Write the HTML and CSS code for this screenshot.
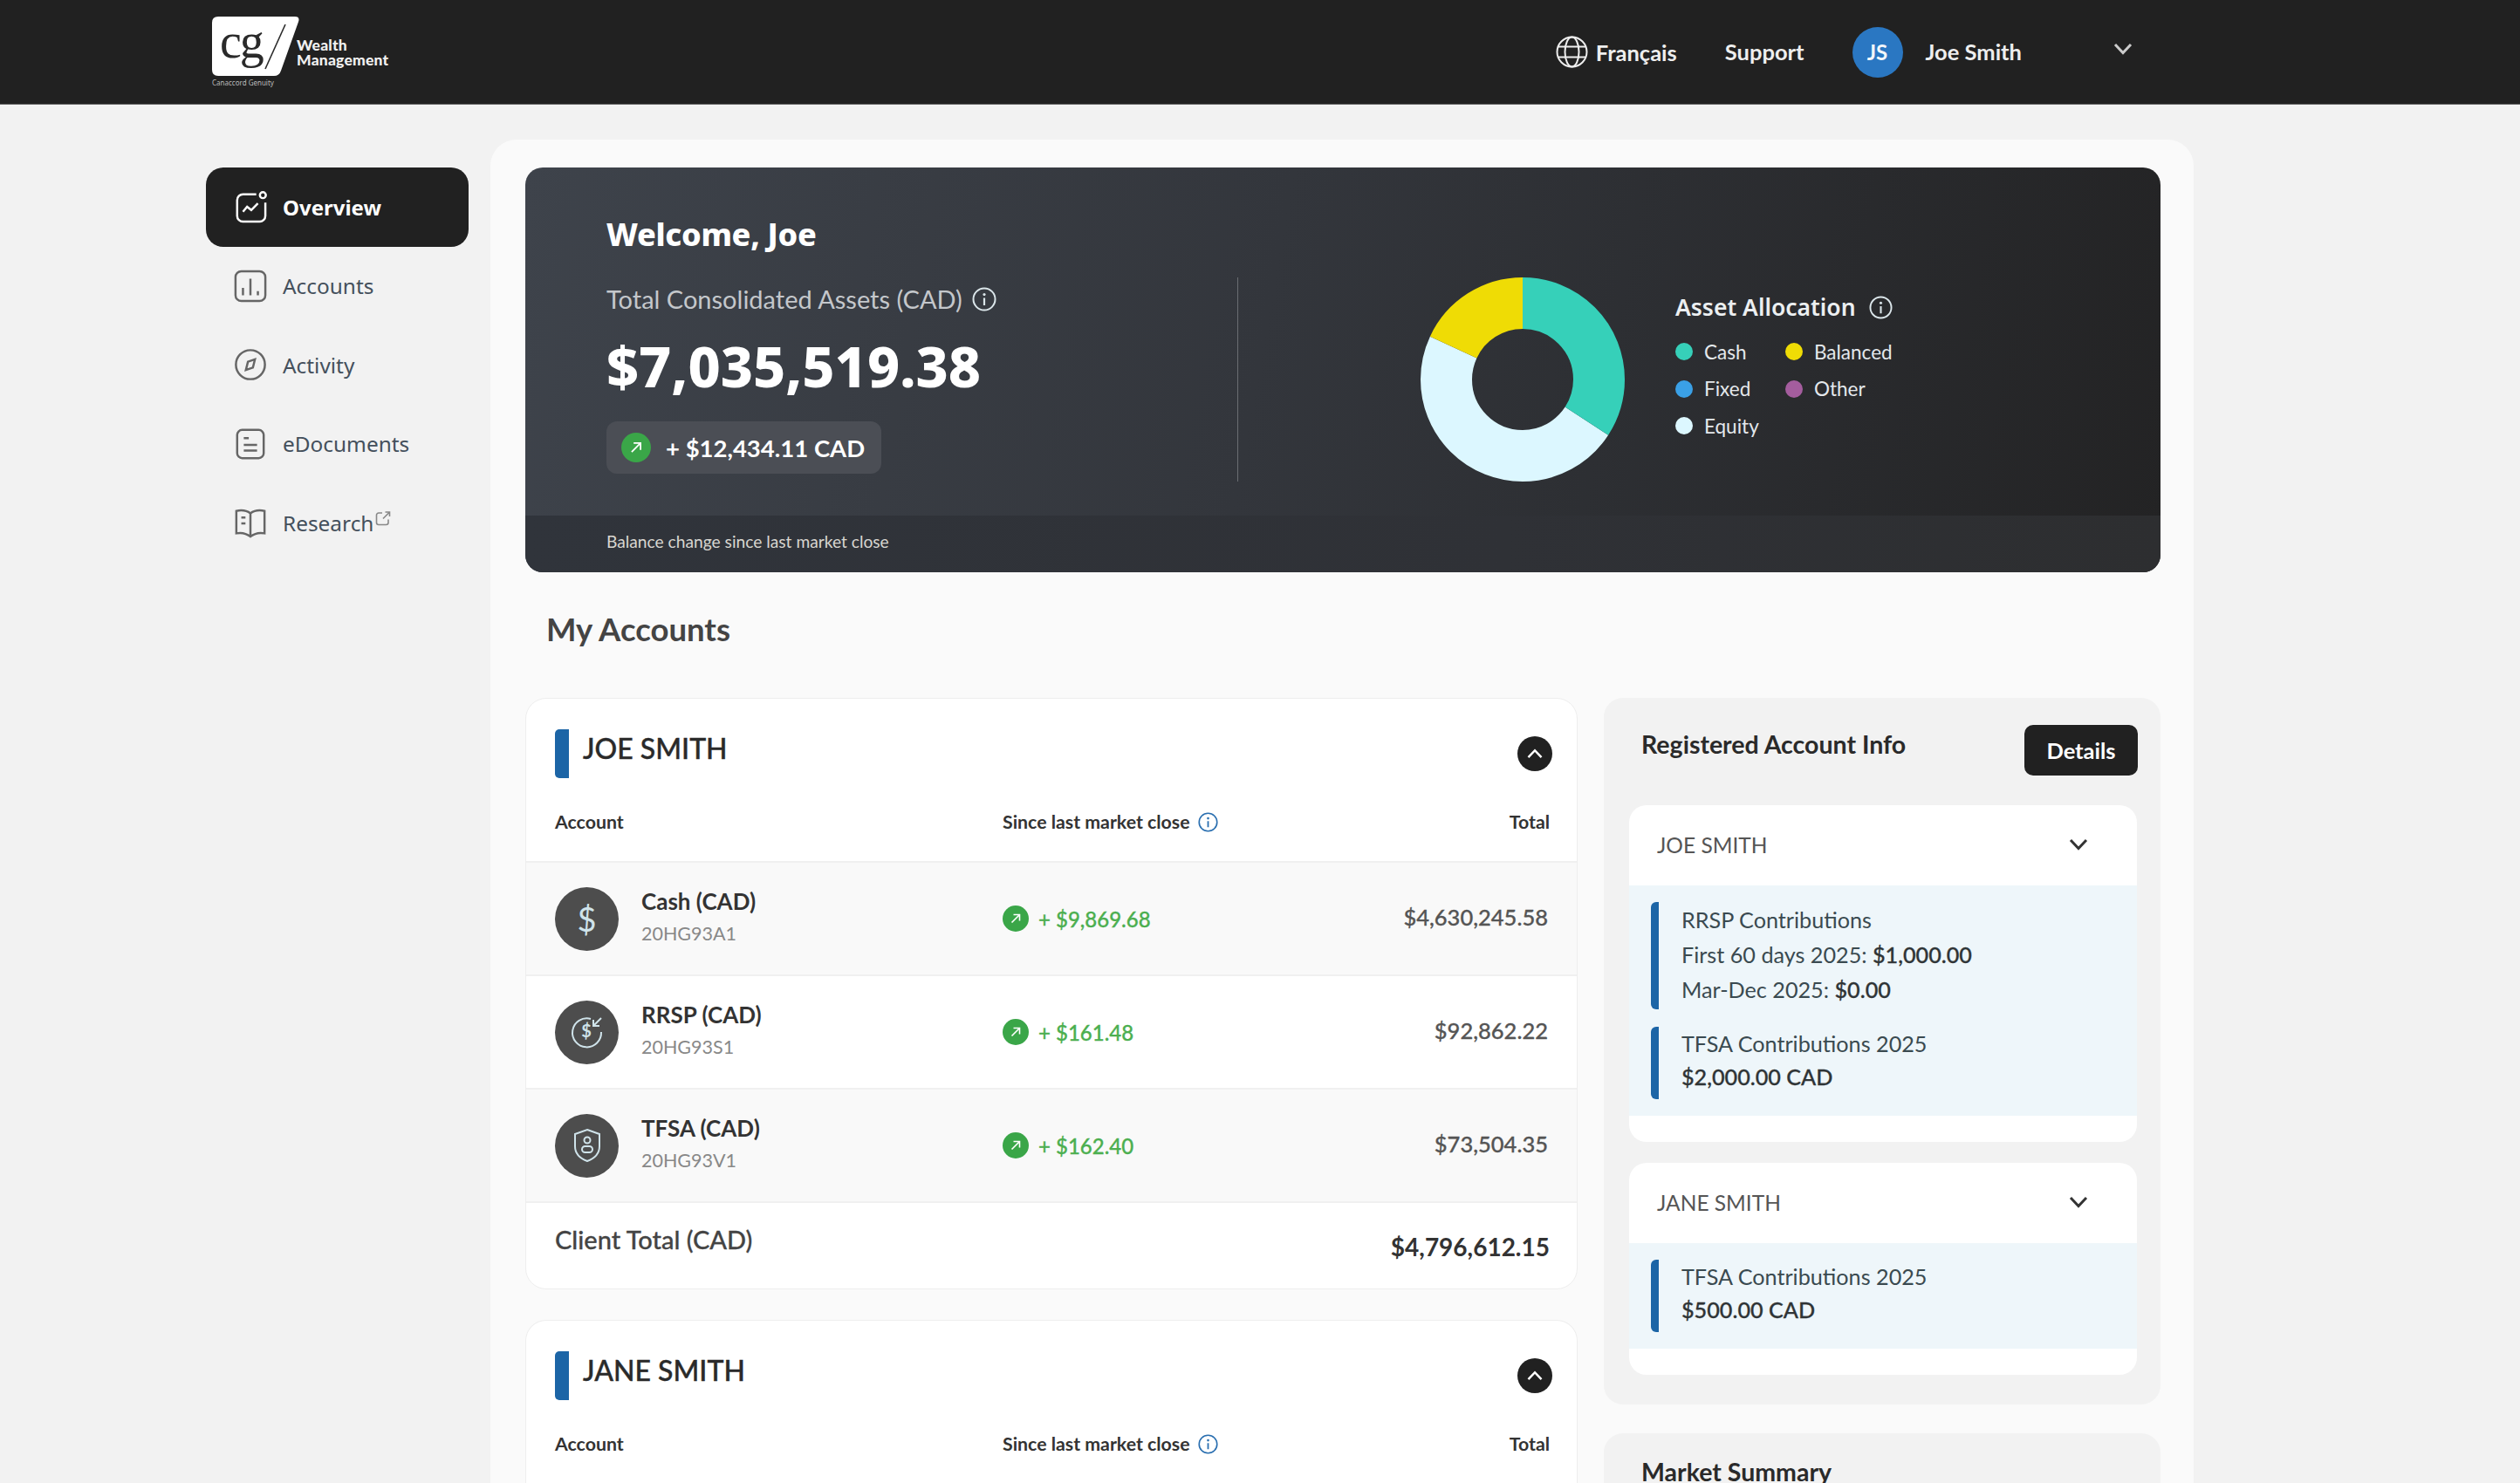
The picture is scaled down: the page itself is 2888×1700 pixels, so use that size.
FILE: index.html
```html
<!DOCTYPE html>
<html lang="en">
<head>
    <meta charset="UTF-8">
    <meta name="viewport" content="width=device-width, initial-scale=1.0">
    <title>CG Wealth Management - Overview</title>
    <link rel="stylesheet" href="styles.css">
</head>
<body>

    <svg class="icon-defs" width="0" height="0">
        <symbol id="arrow-up-right" viewBox="0 0 30 30">
            <circle cx="15" cy="15" r="15" fill="#3aa648"/>
            <path d="M10.5 19.5 19 11M12.5 10.5H19.5V17.5" fill="none" stroke="#fff" stroke-width="1.6"/>
        </symbol>
        <symbol id="info" viewBox="0 0 28 28">
            <circle cx="14" cy="14" r="12.5" fill="none" stroke="currentColor" stroke-width="2"/>
            <path d="M14 12.5V21" stroke="currentColor" stroke-width="2.2" fill="none"/>
            <circle cx="14" cy="8.6" r="1.6" fill="currentColor"/>
        </symbol>
        <symbol id="chevron" viewBox="0 0 24 16">
            <path d="M3 3 12 12.5 21 3" fill="none" stroke="currentColor" stroke-width="3"/>
        </symbol>
    </svg>

    <!-- Top bar -->
    <header class="topbar">
        <div class="logo">
            <div class="logo-mark">
                <svg class="logo-shape" viewBox="0 0 100 68">
                    <path d="M7 0H95Q101 0 99 6L79 62Q77 68 71 68H7Q0 68 0 61V7Q0 0 7 0Z" fill="#fff"/>
                    <path d="M84 9 61 60" stroke="#2a2a2a" stroke-width="1.6"/>
                </svg>
                <span class="logo-cg">cg</span>
                <div class="logo-sub">Canaccord Genuity</div>
            </div>
            <div class="logo-name">Wealth<br>Management</div>
        </div>
        <nav class="top-menu">
            <a class="lang" href="#">
                <svg width="37" height="37" viewBox="0 0 37 37" fill="none" stroke="#eee" stroke-width="2">
                    <circle cx="18.5" cy="18.5" r="17"/>
                    <ellipse cx="18.5" cy="18.5" rx="8" ry="17"/>
                    <path d="M3 12.5H34M3 24.5H34"/>
                </svg>
                Français
            </a>
            <a class="support" href="#">Support</a>
            <div class="avatar">JS</div>
            <a class="user-name" href="#">Joe Smith</a>
            <svg class="user-chevron" width="24" height="16"><use href="#chevron"/></svg>
        </nav>
    </header>

    <div class="page">
        <!-- Side menu -->
        <aside class="sidebar">
            <a class="side-item active" href="#">
                <svg class="side-icon" viewBox="0 0 40 40" fill="none" stroke="currentColor" stroke-width="2.6">
                    <path d="M27 5H11a7 7 0 0 0-7 7V31a7 7 0 0 0 7 7H31a7 7 0 0 0 7-7V15"/>
                    <circle cx="35" cy="6" r="3.6"/>
                    <path d="M11 26 16 20 21 24 29 16"/>
                </svg>
                Overview
            </a>
            <a class="side-item" href="#">
                <svg class="side-icon" viewBox="0 0 40 40" fill="none" stroke="#666" stroke-width="2.6">
                    <rect x="2" y="2" width="36" height="36" rx="7"/>
                    <path d="M11 22V31M20 11V31M29 26V31"/>
                </svg>
                Accounts
            </a>
            <a class="side-item" href="#">
                <svg class="side-icon" viewBox="0 0 40 40" fill="none" stroke="#666" stroke-width="2.6">
                    <circle cx="20" cy="20" r="17.5"/>
                    <path d="M25.5 13.5 23 23.5 14.5 26.5 17 16.5Z"/>
                </svg>
                Activity
            </a>
            <a class="side-item" href="#">
                <svg class="side-icon" viewBox="0 0 40 40" fill="none" stroke="#666" stroke-width="2.6">
                    <rect x="4" y="3" width="32" height="34" rx="6"/>
                    <path d="M12 13H18M12 21H28M12 28H28"/>
                </svg>
                eDocuments
            </a>
            <a class="side-item" href="#">
                <svg class="side-icon" viewBox="0 0 40 40" fill="none" stroke="#666" stroke-width="2.6">
                    <path d="M20 9C15 5 8 5 3 6V33C8 32 15 33 20 37C25 33 32 32 37 33V6C32 5 25 5 20 9ZM20 9V37"/>
                    <path d="M9 14H14M9 21H14"/>
                </svg>
                Research
                <svg class="ext-icon" viewBox="0 0 18 18" fill="none" stroke="#888" stroke-width="1.6">
                    <path d="M8 3H4a2.5 2.5 0 0 0-2.500 2.500V14A2.500 2.500 0 0 0 4 16.500h8.500A2.500 2.500 0 0 0 15 14V10.500M9 9.500 16 2.500M11.500 2H16.500V7"/>
                </svg>
            </a>
        </aside>

        <main class="main-panel">
            <!-- Welcome banner -->
            <section class="hero">
                <div class="hero-top">
                    <div class="hero-left">
                        <h1 class="welcome">Welcome, Joe</h1>
                        <div class="assets-label">Total Consolidated Assets (CAD)
                            <svg class="info-light" width="28" height="28"><use href="#info"/></svg>
                        </div>
                        <div class="assets-value">$7,035,519.38</div>
                        <div class="change-chip">
                            <svg width="34" height="34"><use href="#arrow-up-right"/></svg>
                            + $12,434.11 CAD
                        </div>
                    </div>
                    <div class="hero-divider"></div>
                    <svg class="donut" width="234" height="234" viewBox="0 0 234 234" fill="none" stroke-width="59">
                        <g transform="rotate(-90 117 117)">
                            <circle cx="117" cy="117" r="87.500" stroke="#dcf7ff" pathLength="360" stroke-dasharray="172 360" stroke-dashoffset="-123"/>
                            <circle cx="117" cy="117" r="87.500" stroke="#36d0b9" pathLength="360" stroke-dasharray="123 360"/>
                            <circle cx="117" cy="117" r="87.500" stroke="#efdc05" pathLength="360" stroke-dasharray="65 360" stroke-dashoffset="-295"/>
                        </g>
                    </svg>
                    <div class="legend">
                        <div class="legend-title">Asset Allocation
                            <svg class="info-light" width="27" height="27"><use href="#info"/></svg>
                        </div>
                        <div class="legend-grid">
                            <div class="legend-item"><span class="dot dot-cash"></span>Cash</div>
                            <div class="legend-item"><span class="dot dot-balanced"></span>Balanced</div>
                            <div class="legend-item"><span class="dot dot-fixed"></span>Fixed</div>
                            <div class="legend-item"><span class="dot dot-other"></span>Other</div>
                            <div class="legend-item"><span class="dot dot-equity"></span>Equity</div>
                        </div>
                    </div>
                </div>
                <div class="hero-foot">Balance change since last market close</div>
            </section>

            <h2 class="section-title">My Accounts</h2>

            <div class="columns">
                <div class="accounts-col">
                    <section class="card">
                        <div class="card-head">
                            <span class="name-bar"></span>
                            <h3 class="client-name">JOE SMITH</h3>
                            <button class="toggle">
                                <svg width="20" height="14"><use href="#chevron"/></svg>
                            </button>
                        </div>
                        <div class="table-head">
                            <div>Account</div>
                            <div class="since">Since last market close
                                <svg class="info-blue" width="23" height="23"><use href="#info"/></svg>
                            </div>
                            <div class="right">Total</div>
                        </div>
                        <div class="row shaded">
                            <div class="acct">
                                <div class="acct-icon"><span class="dollar">$</span></div>
                                <div>
                                    <div class="acct-name">Cash (CAD)</div>
                                    <div class="acct-no">20HG93A1</div>
                                </div>
                            </div>
                            <div class="change"><svg width="30" height="30"><use href="#arrow-up-right"/></svg>+ $9,869.68</div>
                            <div class="amount">$4,630,245.58</div>
                        </div>
                        <div class="row">
                            <div class="acct">
                                <div class="acct-icon">
                                    <svg width="40" height="40" viewBox="0 0 40 40" fill="none" stroke="#cfe3ea" stroke-width="2">
                                        <path d="M24 5A16.500 16.500 0 1 0 36 20"/>
                                        <path d="M36 4 27 13M27 6V13H34"/>
                                        <text class="rrsp-dollar" x="19" y="26" text-anchor="middle">$</text>
                                    </svg>
                                </div>
                                <div>
                                    <div class="acct-name">RRSP (CAD)</div>
                                    <div class="acct-no">20HG93S1</div>
                                </div>
                            </div>
                            <div class="change"><svg width="30" height="30"><use href="#arrow-up-right"/></svg>+ $161.48</div>
                            <div class="amount">$92,862.22</div>
                        </div>
                        <div class="row shaded">
                            <div class="acct">
                                <div class="acct-icon">
                                    <svg width="34" height="40" viewBox="0 0 34 40" fill="none" stroke="#cfe3ea" stroke-width="2">
                                        <path d="M17 2 31 7V21C31 29 25 35 17 38 9 35 3 29 3 21V7Z"/>
                                        <circle cx="17" cy="14" r="3.500"/>
                                        <rect x="11" y="21" width="12" height="7" rx="3.500"/>
                                    </svg>
                                </div>
                                <div>
                                    <div class="acct-name">TFSA (CAD)</div>
                                    <div class="acct-no">20HG93V1</div>
                                </div>
                            </div>
                            <div class="change"><svg width="30" height="30"><use href="#arrow-up-right"/></svg>+ $162.40</div>
                            <div class="amount">$73,504.35</div>
                        </div>
                        <div class="card-foot">
                            <div class="client-total">Client Total (CAD)</div>
                            <div class="client-sum">$4,796,612.15</div>
                        </div>
                    </section>

                    <section class="card card-open">
                        <div class="card-head">
                            <span class="name-bar"></span>
                            <h3 class="client-name">JANE SMITH</h3>
                            <button class="toggle">
                                <svg width="20" height="14"><use href="#chevron"/></svg>
                            </button>
                        </div>
                        <div class="table-head">
                            <div>Account</div>
                            <div class="since">Since last market close
                                <svg class="info-blue" width="23" height="23"><use href="#info"/></svg>
                            </div>
                            <div class="right">Total</div>
                        </div>
                    </section>
                </div>

                <div class="side-col">
                    <section class="info-panel">
                        <div class="info-head">
                            <h3 class="panel-title">Registered Account Info</h3>
                            <button class="details-btn">Details</button>
                        </div>

                        <div class="reg-card">
                            <div class="reg-head">JOE SMITH
                                <svg width="24" height="16"><use href="#chevron"/></svg>
                            </div>
                            <div class="reg-body">
                                <div class="contrib">
                                    <div>RRSP Contributions</div>
                                    <div>First 60 days 2025: <span class="val">$1,000.00</span></div>
                                    <div>Mar-Dec 2025: <span class="val">$0.00</span></div>
                                </div>
                                <div class="contrib contrib-short">
                                    <div>TFSA Contributions 2025</div>
                                    <div class="val">$2,000.00 CAD</div>
                                </div>
                            </div>
                        </div>

                        <div class="reg-card">
                            <div class="reg-head">JANE SMITH
                                <svg width="24" height="16"><use href="#chevron"/></svg>
                            </div>
                            <div class="reg-body">
                                <div class="contrib contrib-short">
                                    <div>TFSA Contributions 2025</div>
                                    <div class="val">$500.00 CAD</div>
                                </div>
                            </div>
                        </div>
                    </section>

                    <section class="info-panel market">
                        <h3 class="panel-title">Market Summary</h3>
                    </section>
                </div>
            </div>
        </main>
    </div>

</body>
</html>
```

FILE: styles.css
```css
html, body {
    height: 100%;
}

body {
    margin: 0;
    height: 100vh;
    overflow: hidden;
    background-color: #f2f2f2;
    color: #333;
    font-family: 'Noto Sans', sans-serif;
}

a {
    color: inherit;
    text-decoration: none;
}

h1, h2, h3 {
    margin: 0;
}

.icon-defs {
    position: absolute;
}

/* Header Styles */
.topbar {
    display: flex;
    align-items: center;
    height: 119px;
    padding-left: 243px;
    background-color: #212121;
    border-bottom: 1px solid #666;
}

.logo {
    display: flex;
    align-items: center;
}

.logo-mark {
    position: relative;
    width: 100px;
    height: 68px;
    margin-top: -13px;
}

.logo-shape {
    position: absolute;
    top: 0;
    left: 0;
    width: 100px;
    height: 68px;
}

.logo-cg {
    position: absolute;
    left: 9px;
    top: -3px;
    font-family: 'Liberation Serif', serif;
    font-size: 56px;
    line-height: 62px;
    letter-spacing: -2px;
    color: #2a2a2a;
}

.logo-sub {
    position: absolute;
    left: 0;
    top: 70px;
    width: 90px;
    font-size: 8px;
    line-height: 12px;
    white-space: nowrap;
    color: #bbb;
}

.logo-name {
    margin-left: -3px;
    font-family: 'Lato', sans-serif;
    font-size: 17.5px;
    font-weight: 900;
    line-height: 17px;
    letter-spacing: 0.2px;
    color: #f0f0f0;
}

.top-menu {
    display: flex;
    align-items: center;
    margin-left: auto;
    margin-right: 443px;
    font-family: 'Lato', sans-serif;
    font-size: 25.5px;
    font-weight: 700;
    color: #eee;
}

.lang {
    display: flex;
    align-items: center;
    gap: 9px;
}

.support {
    margin-left: 55px;
    padding-bottom: 2px;
}

.avatar {
    display: flex;
    justify-content: center;
    align-items: center;
    width: 58px;
    height: 58px;
    margin-left: 55px;
    border-radius: 50%;
    background-color: #2a77c2;
    font-size: 24px;
    color: #f2f6fa;
}

.user-name {
    margin-left: 26px;
    padding-bottom: 2px;
}

.user-chevron {
    margin: -8px 0 0 104px;
    color: #ccc;
}

/* Page Layout */
.page {
    display: flex;
    padding: 40px 0 0 236px;
}

.sidebar {
    width: 301px;
    margin: 32px 25px 0 0;
}

.side-item {
    display: flex;
    align-items: center;
    height: 90.5px;
    padding-left: 32px;
    font-size: 24.4px;
    color: #44505c;
}

.side-item.active {
    border-radius: 20px;
    background-color: #212121;
    font-weight: 700;
    font-size: 24px;
    color: #fff;
}

.side-icon {
    width: 38px;
    height: 38px;
    margin-right: 18px;
}

.ext-icon {
    width: 18px;
    height: 18px;
    margin: -10px 0 0 2px;
}

.main-panel {
    width: 1952px;
    height: 1540px;
    overflow: hidden;
    padding: 32px 0 0 40px;
    box-sizing: border-box;
    border-radius: 30px 30px 0 0;
    background-color: #fafafa;
}

/* Welcome banner */
.hero {
    width: 1874px;
    height: 464px;
    overflow: hidden;
    border-radius: 20px;
    background: linear-gradient(100deg, #3e434b 0%, #33363c 45%, #232324 100%);
    color: #fff;
}

.hero-top {
    display: flex;
    height: 399px;
}

.hero-left {
    width: 816px;
    padding-left: 93px;
    box-sizing: border-box;
    font-family: 'Lato', sans-serif;
}

.welcome {
    margin-top: 54px;
    font-family: 'Noto Sans', sans-serif;
    font-size: 36px;
    line-height: 46px;
    font-weight: 800;
    letter-spacing: -0.3px;
}

.assets-label {
    display: flex;
    align-items: center;
    gap: 11px;
    margin-top: 33px;
    font-size: 29px;
    line-height: 36px;
    color: #c4c7cb;
}

.info-light {
    color: #dbe6ea;
}

.assets-value {
    margin-top: 20px;
    font-family: 'Noto Sans', sans-serif;
    font-size: 64.5px;
    line-height: 76px;
    font-weight: 800;
}

.change-chip {
    display: flex;
    align-items: center;
    gap: 17px;
    width: 315px;
    height: 60px;
    margin-top: 26px;
    padding-left: 17px;
    box-sizing: border-box;
    border-radius: 12px;
    background-color: #4b4e55;
    font-size: 27.5px;
    font-weight: 700;
}

.hero-divider {
    width: 1px;
    height: 234px;
    margin-top: 126px;
    background-color: #6a6d72;
}

.donut {
    margin: 126px 0 0 209px;
}

.legend {
    margin: 143px 0 0 58px;
    font-family: 'Lato', sans-serif;
}

.legend-title {
    display: flex;
    align-items: center;
    gap: 15px;
    font-family: 'Noto Sans', sans-serif;
    font-size: 26.5px;
    line-height: 34px;
    font-weight: 600;
    color: #eceff1;
}

.legend-grid {
    display: grid;
    grid-template-columns: 126px auto;
    grid-auto-rows: 42.5px;
    margin-top: 13px;
}

.legend-item {
    display: flex;
    align-items: center;
    gap: 13px;
    font-size: 22.5px;
    color: #e4e8ec;
}

.dot {
    width: 20px;
    height: 20px;
    border-radius: 50%;
}

.dot-cash { background-color: #36d0b9; }
.dot-balanced { background-color: #efdc05; }
.dot-fixed { background-color: #3aa0e6; }
.dot-other { background-color: #a45d9e; }
.dot-equity { background-color: #dcf7ff; }

.hero-foot {
    height: 65px;
    padding-left: 93px;
    background: linear-gradient(90deg, #30343b 0%, #2f3136 60%, #2d2e30 100%);
    font-family: 'Lato', sans-serif;
    font-size: 19.2px;
    line-height: 60px;
    color: #d8d6d0;
}

.section-title {
    margin: 43px 0 57px 24px;
    font-family: 'Lato', sans-serif;
    font-size: 36.5px;
    line-height: 44px;
    font-weight: 700;
    color: #444;
}

.columns {
    display: flex;
    gap: 30px;
    width: 1874px;
    font-family: 'Lato', sans-serif;
}

/* Account cards */
.accounts-col {
    width: 1206px;
}

.card {
    box-sizing: border-box;
    margin-bottom: 35px;
    border: 1px solid #eee;
    border-radius: 24px;
    background-color: #fff;
}

.card-open {
    margin-bottom: 0;
    border-bottom: none;
    border-radius: 24px 24px 0 0;
}

.card-head {
    display: flex;
    align-items: flex-start;
    padding: 35px 28px 0 33px;
}

.name-bar {
    width: 16px;
    height: 56px;
    border-radius: 5px 0 0 5px;
    background-color: #1c65a6;
}

.client-name {
    margin-left: 16px;
    font-size: 32px;
    line-height: 44px;
    font-weight: 500;
    -webkit-text-stroke: 0.4px #2a2a2a;
    color: #2a2a2a;
}

.toggle {
    display: flex;
    justify-content: center;
    align-items: center;
    width: 40px;
    height: 40px;
    margin: 8px 0 0 auto;
    padding: 0;
    border: none;
    border-radius: 50%;
    background-color: #212121;
    color: #fff;
}

.toggle svg {
    transform: rotate(180deg);
}

.table-head {
    display: grid;
    grid-template-columns: 513px 1fr auto;
    padding: 35px 31px 30px 33px;
    font-size: 21.3px;
    line-height: 30px;
    font-weight: 700;
    color: #333;
}

.since {
    display: flex;
    align-items: center;
    gap: 9px;
}

.info-blue {
    color: #2a6fb0;
}

.row {
    display: grid;
    grid-template-columns: 513px 1fr auto;
    align-items: center;
    height: 130px;
    padding: 0 33px 0 33px;
    box-sizing: border-box;
    border-top: 2px solid #f0f0f0;
}

.shaded {
    background-color: #f9f9f9;
}

.acct {
    display: flex;
    align-items: center;
    gap: 26px;
}

.acct-icon {
    display: flex;
    justify-content: center;
    align-items: center;
    width: 73px;
    height: 73px;
    border-radius: 50%;
    background-color: #4d4d4d;
}

.dollar {
    font-size: 38px;
    font-weight: 400;
    color: #cfe3ea;
}

.rrsp-dollar {
    font-size: 20px;
    font-weight: 700;
    fill: #cfe3ea;
    stroke: none;
}

.acct-name {
    font-size: 26px;
    line-height: 37px;
    font-weight: 700;
    color: #333;
    margin-top: -3px;
}

.acct-no {
    font-size: 21.5px;
    line-height: 37px;
    color: #888;
}

.change {
    display: flex;
    align-items: center;
    gap: 11px;
    font-size: 24px;
    font-weight: 500;
    -webkit-text-stroke: 0.3px #4caf50;
    color: #4caf50;
}

.amount {
    font-size: 25.5px;
    font-weight: 500;
    -webkit-text-stroke: 0.3px #555;
    color: #555;
    margin-top: -5px;
}

.right {
    text-align: right;
}

.card-foot {
    display: flex;
    justify-content: space-between;
    height: 100px;
    padding: 24px 31px 0 33px;
    box-sizing: border-box;
    border-top: 2px solid #f0f0f0;
}

.client-total {
    font-size: 29px;
    line-height: 36px;
    font-weight: 500;
    -webkit-text-stroke: 0.3px #444;
    color: #444;
}

.client-sum {
    margin-top: 8px;
    font-size: 28px;
    line-height: 36px;
    font-weight: 700;
    color: #333;
}

/* Right column */
.side-col {
    width: 638px;
}

.info-panel {
    box-sizing: border-box;
    margin-bottom: 33px;
    padding: 31px 27px 34px 29px;
    border-radius: 22px;
    background-color: #f2f2f2;
}

.info-head {
    display: flex;
    justify-content: space-between;
    margin: 0 -1px 34px 0;
    padding-left: 14px;
}

.panel-title {
    font-size: 28.5px;
    line-height: 45px;
    font-weight: 700;
    color: #2a2a2a;
}

.details-btn {
    width: 130px;
    height: 58px;
    padding: 0;
    border: none;
    border-radius: 10px;
    background-color: #212121;
    font-family: 'Lato', sans-serif;
    font-size: 25.5px;
    font-weight: 700;
    color: #fff;
}

.reg-card {
    margin-bottom: 24px;
    padding-bottom: 30px;
    border-radius: 20px;
    background-color: #fff;
}

.reg-card:last-child {
    margin-bottom: 0;
}

.reg-head {
    display: flex;
    justify-content: space-between;
    align-items: center;
    height: 90px;
    padding: 0 55px 2px 32px;
    font-size: 24.5px;
    color: #555;
}

.reg-head svg {
    color: #333;
}

.reg-body {
    display: flex;
    flex-direction: column;
    gap: 20px;
    padding: 19px 0 19px 25px;
    background-color: #eef6fa;
}

.contrib {
    padding: 0 0 3px 26px;
    border-left: 9px solid #1c65a6;
    border-radius: 6px 0 0 6px;
    font-size: 25.2px;
    line-height: 40px;
    color: #3a4a50;
}

.contrib-short {
    padding-bottom: 7px;
    line-height: 38px;
}

.val {
    color: #2f3436;
    font-weight: 500;
    -webkit-text-stroke: 0.3px #2f3436;
}

.market {
    height: 57px;
    margin-bottom: 0;
    padding-top: 31px;
    padding-left: 43px;
    border-radius: 22px 22px 0 0;
}

.market .panel-title {
    line-height: 26px;
}
```
